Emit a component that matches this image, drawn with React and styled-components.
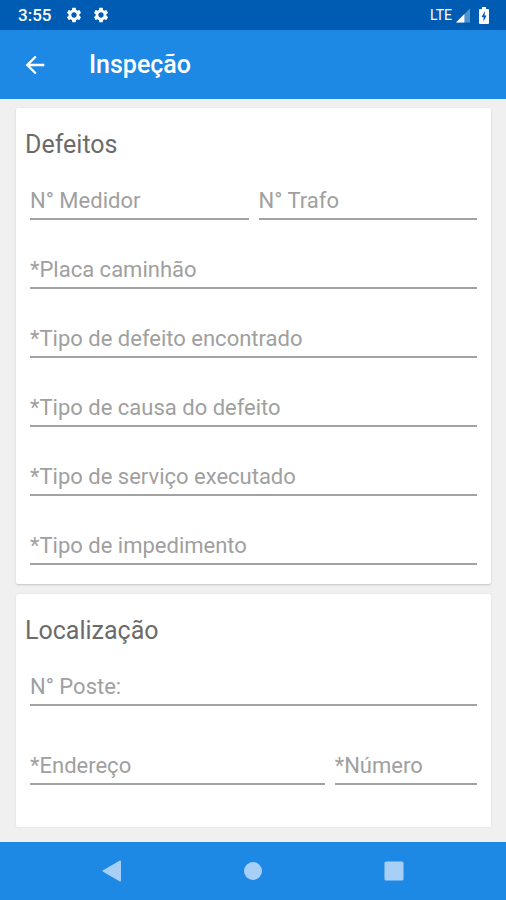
import React from 'react'
import styled, { createGlobalStyle } from 'styled-components'
import { MdArrowBack, MdSettings } from 'react-icons/md'

const GlobalStyle = createGlobalStyle`
* {
  box-sizing: border-box;
}
body {
  margin: 0;
  font-family: Roboto, sans-serif;
  background-color: #f0f0f0;
}
`
const Page = styled.div`
display: flex;
flex-direction: column;
min-height: 100vh;
`
const StatusBar = styled.div`
display: flex;
align-items: center;
justify-content: space-between;
height: 30px;
padding: 0 17px 0 18px;
background-color: #005cb2;
color: white;
`
const StatusGroup = styled.div`
display: flex;
align-items: center;
gap: ${(props) => props.$gap};
`
const Clock = styled.span`
font-size: 17px;
font-weight: 500;
margin-right: 5px;
`
const Network = styled.span`
font-size: 14px;
`
const Battery = styled.svg`
margin-left: 5px;
`
const AppBar = styled.header`
display: flex;
align-items: center;
gap: 40px;
height: 69px;
padding: 0 21px;
background-color: #1e88e5;
color: white;
`
const BackButton = styled.button`
display: flex;
padding: 0;
border: none;
background: transparent;
color: white;
`
const AppTitle = styled.h1`
margin: 0;
font-size: 25px;
font-weight: 500;
line-height: 30px;
`
const Form = styled.form`
display: flex;
flex-direction: column;
flex: 1;
gap: 10px;
padding: 9px 15px 15px 16px;
`
const Card = styled.section`
flex-grow: ${(props) => (props.$fill ? 1 : 0)};
padding: 22px 9px 19px;
border-radius: 2px;
background-color: white;
box-shadow: ${(props) => (props.$fill ? '0 0 2px #d8d8d8' : '0 1px 2px #c4c4c4')};
`
const CardTitle = styled.h2`
margin: 0 0 20px;
color: #6b6b6b;
font-size: 25px;
font-weight: 400;
line-height: 30px;
`
const Fields = styled.div`
display: flex;
flex-direction: column;
gap: ${(props) => props.$gap};
`
const Row = styled.div`
display: grid;
grid-template-columns: ${(props) => props.$columns || '1fr'};
`
const FieldBox = styled.div`
padding: 0 5px;
`
const Input = styled.input`
display: block;
width: 100%;
height: 40px;
padding: 2px 0 0;
border: none;
border-bottom: 2px solid #a3a3a3;
border-radius: 0;
outline: none;
background: transparent;
color: #444444;
font-family: inherit;
font-size: 22px;
&::placeholder {
  color: #a0a0a0;
  opacity: 1;
}
&:focus {
  border-color: #1e88e5;
}
`
const NavBar = styled.nav`
display: flex;
align-items: center;
justify-content: space-around;
height: 58px;
padding: 0 42px;
background-color: #1e88e5;
`
const NavButton = styled.button`
display: flex;
padding: 0;
border: none;
background: transparent;
color: #a8cff5;
`

const Field = ({ label }) => (
  <FieldBox>
    <Input type="text" aria-label={label} placeholder={label} />
  </FieldBox>
)

const App = () => {
  return (
    <Page>
      <GlobalStyle />
      <StatusBar>
        <StatusGroup $gap="9px">
          <Clock>3:55</Clock>
          <MdSettings size={18} />
          <MdSettings size={18} />
        </StatusGroup>
        <StatusGroup $gap="4px">
          <Network>LTE</Network>
          <svg width="14" height="15" viewBox="0 0 15 15">
            <path d="M15 0V15H0z" fill="#4f93cf" />
            <path d="M9 6V15H0z" fill="white" />
          </svg>
          <Battery width="10" height="17" viewBox="0 0 10 17">
            <path d="M3 0h4v2h2q1 0 1 1v13q0 1-1 1H1q-1 0-1-1V3q0-1 1-1h2z" fill="white" />
            <path d="M6 4L2.500 10H4.500V14.500L7.500 8.500H5.500z" fill="#005cb2" />
          </Battery>
        </StatusGroup>
      </StatusBar>
      <AppBar>
        <BackButton type="button" aria-label="Voltar">
          <MdArrowBack size={28} />
        </BackButton>
        <AppTitle>Inspeção</AppTitle>
      </AppBar>
      <Form>
        <Card>
          <CardTitle>Defeitos</CardTitle>
          <Fields $gap="29px">
            <Row $columns="1fr 1fr">
              <Field label="N° Medidor" />
              <Field label="N° Trafo" />
            </Row>
            <Row>
              <Field label="*Placa caminhão" />
            </Row>
            <Row>
              <Field label="*Tipo de defeito encontrado" />
            </Row>
            <Row>
              <Field label="*Tipo de causa do defeito" />
            </Row>
            <Row>
              <Field label="*Tipo de serviço executado" />
            </Row>
            <Row>
              <Field label="*Tipo de impedimento" />
            </Row>
          </Fields>
        </Card>
        <Card $fill>
          <CardTitle>Localização</CardTitle>
          <Fields $gap="39px">
            <Row>
              <Field label="N° Poste:" />
            </Row>
            <Row $columns="2fr 1fr">
              <Field label="*Endereço" />
              <Field label="*Número" />
            </Row>
          </Fields>
        </Card>
      </Form>
      <NavBar>
        <NavButton type="button" aria-label="Voltar">
          <svg width="20" height="22" viewBox="0 0 20 22">
            <path d="M18 1.500V20.500L1.500 11z" fill="currentColor" stroke="currentColor" strokeWidth="2" strokeLinejoin="round" />
          </svg>
        </NavButton>
        <NavButton type="button" aria-label="Início">
          <svg width="20" height="20" viewBox="0 0 20 20">
            <circle cx="10" cy="10" r="9" fill="currentColor" />
          </svg>
        </NavButton>
        <NavButton type="button" aria-label="Recentes">
          <svg width="20" height="20" viewBox="0 0 20 20">
            <rect x="0.500" y="0.500" width="19" height="19" rx="1.500" fill="currentColor" />
          </svg>
        </NavButton>
      </NavBar>
    </Page>
  )
}

export default App
